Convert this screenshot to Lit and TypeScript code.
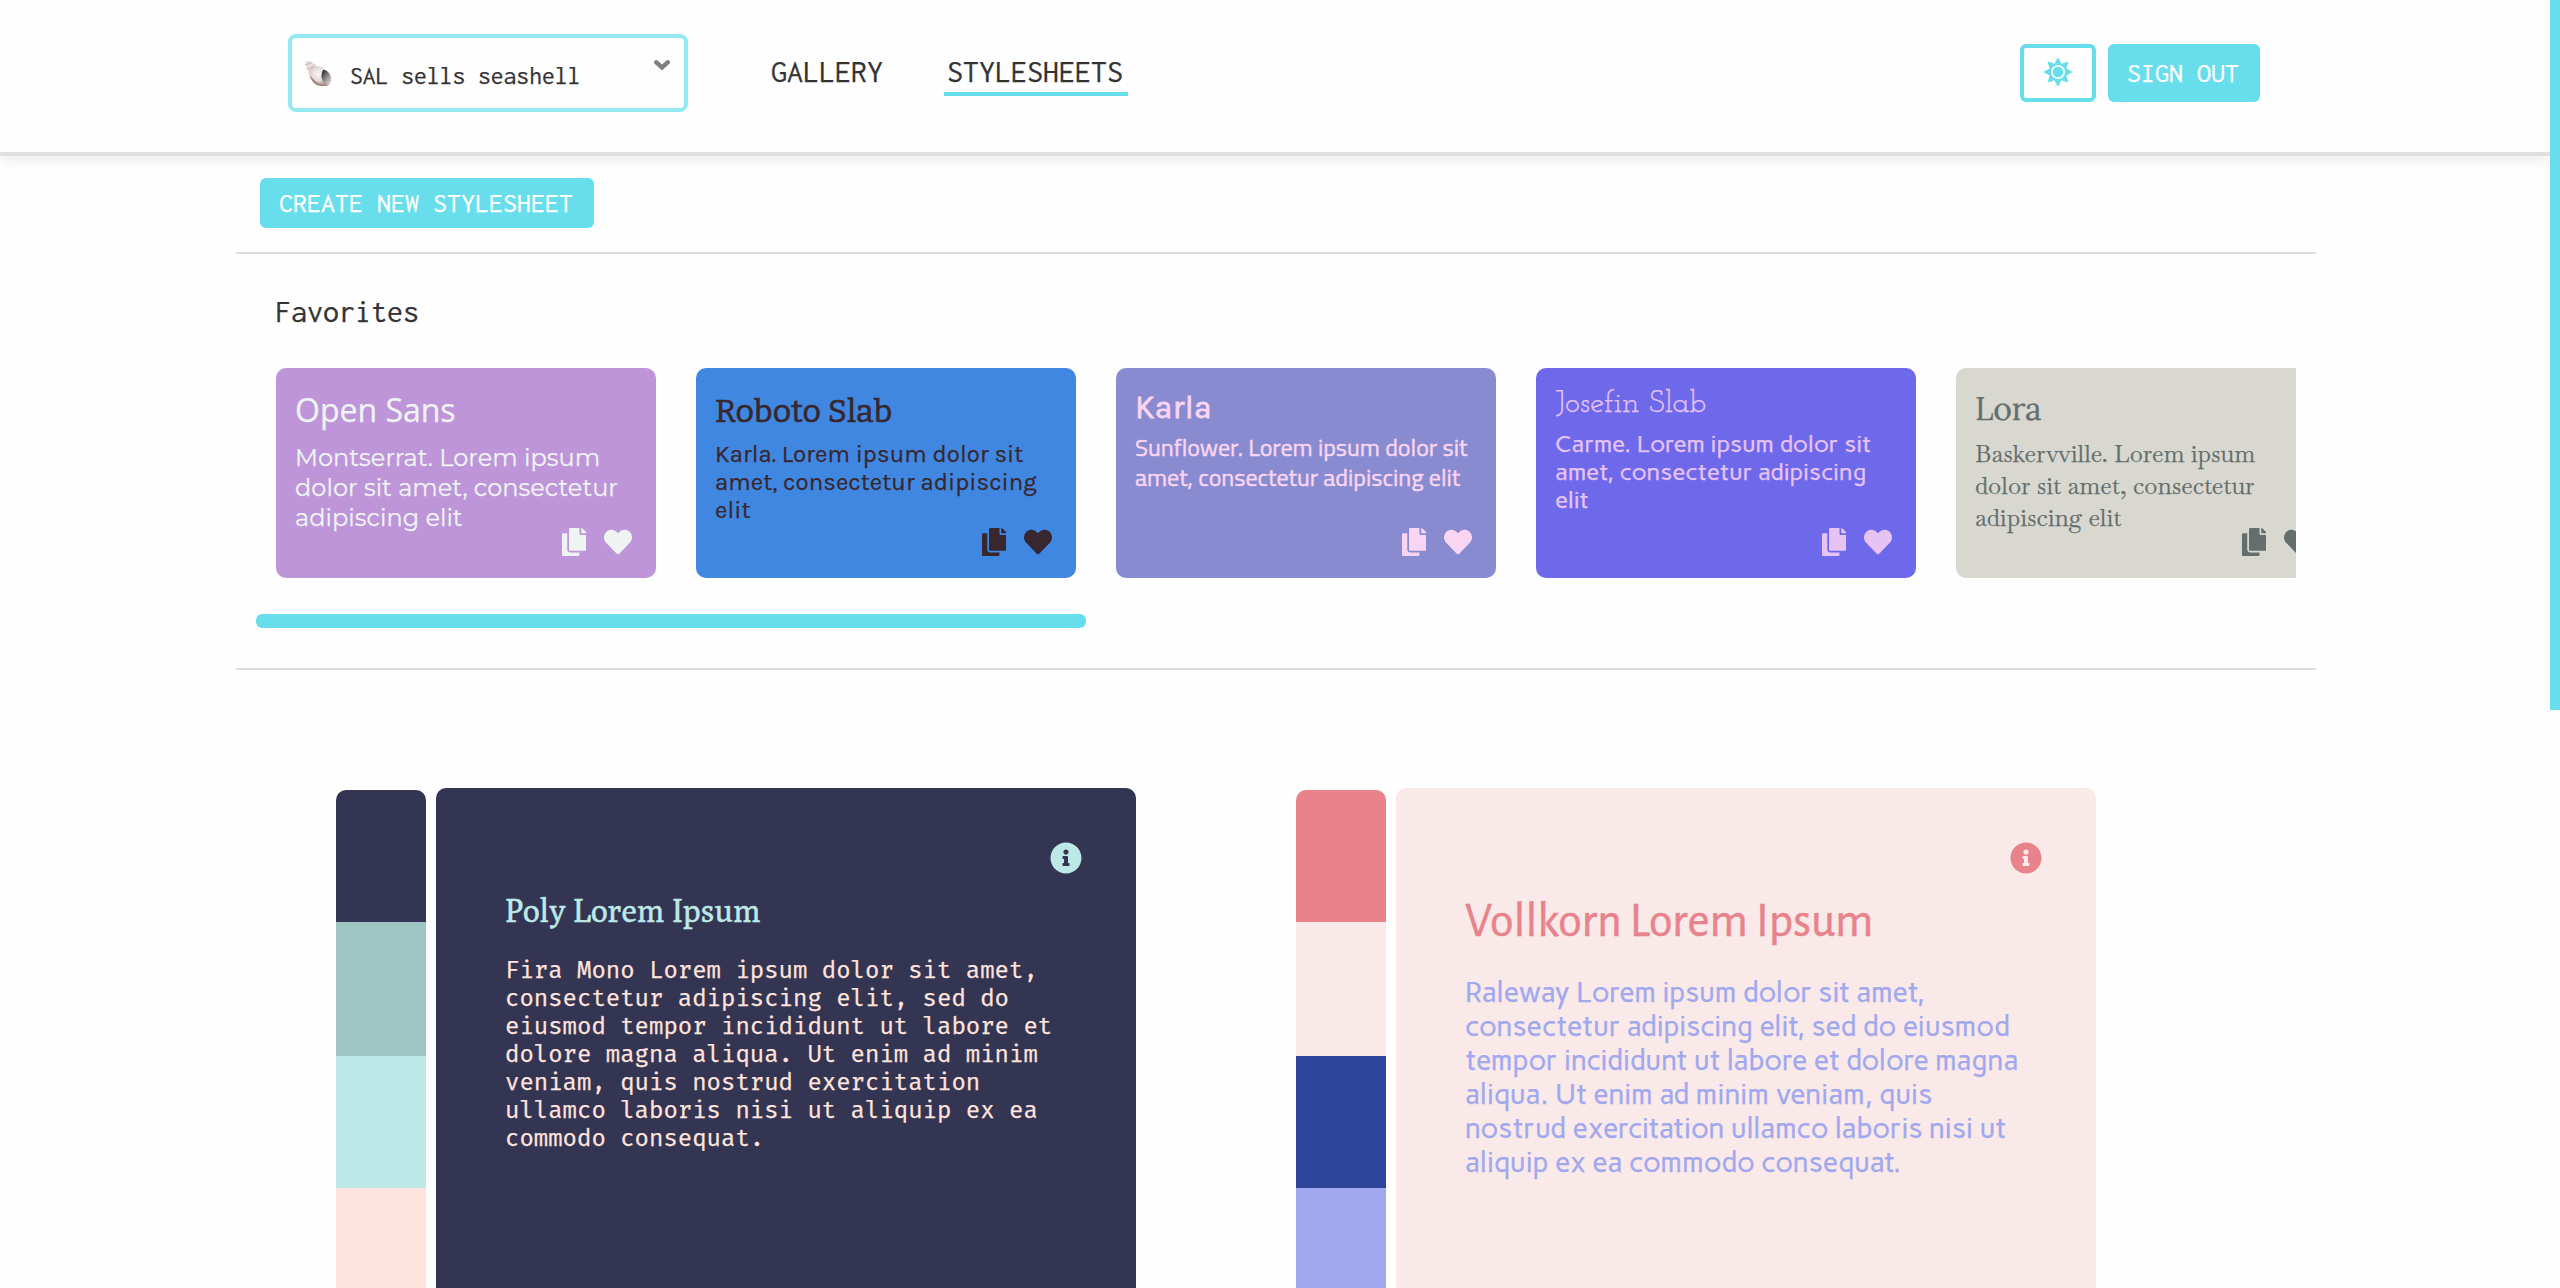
import { LitElement, html, svg, css } from "lit";
import { customElement } from "lit/decorators.js";

const ICONS = {
  copy: {
    box: "0 0 448 512",
    d: "M320 448v40c0 13.255-10.745 24-24 24H24c-13.255 0-24-10.745-24-24V120c0-13.255 10.745-24 24-24h72v296c0 30.879 25.121 56 56 56h168zm0-344V0H152c-13.255 0-24 10.745-24 24v368c0 13.255 10.745 24 24 24h272c13.255 0 24-10.745 24-24V128H344c-13.2 0-24-10.8-24-24zm120.971-31.029L375.029 7.029A24 24 0 0 0 358.059 0H352v96h96v-6.059a24 24 0 0 0-7.029-16.97z",
  },
  heart: {
    box: "0 0 512 512",
    d: "M462.3 62.6C407.5 15.9 326 24.3 275.7 76.2L256 96.5l-19.7-20.3C186.1 24.3 104.5 15.9 49.7 62.6c-62.8 53.6-66.1 149.8-9.9 207.9l193.5 199.8c12.5 12.9 32.8 12.9 45.3 0l193.5-199.8c56.3-58.1 53-154.3-9.8-207.9z",
  },
  info: {
    box: "0 0 512 512",
    d: "M256 8C119.043 8 8 119.083 8 256c0 136.997 111.043 248 248 248s248-111.003 248-248C504 119.083 392.957 8 256 8zm0 110c23.196 0 42 18.804 42 42s-18.804 42-42 42-42-18.804-42-42 18.804-42 42-42zm56 254c0 6.627-5.373 12-12 12h-88c-6.627 0-12-5.373-12-12v-24c0-6.627 5.373-12 12-12h12v-64h-12c-6.627 0-12-5.373-12-12v-24c0-6.627 5.373-12 12-12h64c6.627 0 12 5.373 12 12v100h12c6.627 0 12 5.373 12 12v24z",
  },
  sun: {
    box: "0 0 512 512",
    d: "M256 160c-52.9 0-96 43.1-96 96s43.1 96 96 96 96-43.1 96-96-43.1-96-96-96zm246.4 80.5l-94.7-47.3 33.5-100.4c4.5-13.6-8.4-26.5-21.9-21.9l-100.4 33.5-47.4-94.8c-6.4-12.8-24.6-12.8-31 0l-47.3 94.7L92.7 70.8c-13.6-4.5-26.5 8.4-21.9 21.9l33.5 100.4-94.7 47.4c-12.8 6.4-12.8 24.6 0 31l94.7 47.3-33.5 100.5c-4.5 13.6 8.4 26.5 21.9 21.9l100.4-33.5 47.3 94.7c6.4 12.8 24.6 12.8 31 0l47.3-94.7 100.4 33.5c13.6 4.5 26.5-8.4 21.9-21.9l-33.5-100.4 94.7-47.3c13-6.5 13-24.7.2-31.1zm-155.9 106c-49.9 49.9-131.1 49.9-181 0-49.9-49.9-49.9-131.1 0-181 49.9-49.9 131.1-49.9 181 0 49.9 49.9 49.9 131.1 0 181z",
  },
};

const icon = (name: keyof typeof ICONS) =>
  html`<svg class="icon ${name}" viewBox=${ICONS[name].box}>${svg`<path fill="currentColor" d=${ICONS[name].d}></path>`}</svg>`;

const FAVORITES = [
  { theme: "lilac", title: "Open Sans", text: "Montserrat. Lorem ipsum\ndolor sit amet, consectetur\nadipiscing elit" },
  { theme: "azure", title: "Roboto Slab", text: "Karla. Lorem ipsum dolor sit\namet, consectetur adipiscing\nelit" },
  { theme: "dusk", title: "Karla", text: "Sunflower. Lorem ipsum dolor sit\namet, consectetur adipiscing elit" },
  { theme: "iris", title: "Josefin Slab", text: "Carme. Lorem ipsum dolor sit\namet, consectetur adipiscing\nelit" },
  { theme: "stone", title: "Lora", text: "Baskervville. Lorem ipsum\ndolor sit amet, consectetur\nadipiscing elit" },
];

const SHEETS = [
  {
    theme: "night",
    colors: ["#343453", "#9ec5c1", "#bce9e8", "#ffe4dd"],
    title: "Poly Lorem Ipsum",
    text: "Fira Mono Lorem ipsum dolor sit amet,\nconsectetur adipiscing elit, sed do\neiusmod tempor incididunt ut labore et\ndolore magna aliqua. Ut enim ad minim\nveniam, quis nostrud exercitation\nullamco laboris nisi ut aliquip ex ea\ncommodo consequat.",
  },
  {
    theme: "blush",
    colors: ["#e8828b", "#f9e9e8", "#2d459a", "#a1a8ed"],
    title: "Vollkorn Lorem Ipsum",
    text: "Raleway Lorem ipsum dolor sit amet,\nconsectetur adipiscing elit, sed do eiusmod\ntempor incididunt ut labore et dolore magna\naliqua. Ut enim ad minim veniam, quis\nnostrud exercitation ullamco laboris nisi ut\naliquip ex ea commodo consequat.",
  },
];

@customElement("app-root")
export class AppRoot extends LitElement {
  static styles = css`
    :host {
      display: block;
      --aqua: #68deed;
      font-family: Inconsolata, "Noto Sans Mono CJK SC", "Liberation Mono", monospace;
      color: #333;
      -webkit-text-stroke: 0.25px;
    }
    * { box-sizing: border-box; }
    h2, h3, p { margin: 0; font-weight: 400; }
    svg { display: block; flex: none; }
    .page { display: flex; width: 2560px; height: 1288px; overflow: hidden; background: #fefefe; }
    .content { width: 2550px; }
    .rail { width: 10px; }
    .rail-thumb { height: 710px; background: var(--aqua); }

    header {
      display: flex;
      align-items: flex-start;
      height: 156px;
      padding: 34px 290px 0 288px;
      border-bottom: 4px solid #e0e0e0;
      box-shadow: 0 4px 14px rgba(0, 0, 0, 0.08);
    }
    .select {
      display: flex;
      width: 400px;
      height: 78px;
      padding: 0 14px 0 12px;
      border: 4px solid #94e9f2;
      border-radius: 8px;
      font-size: 25.6px;
      line-height: 28px;
      white-space: pre;
    }
    .shell { width: 28px; height: 28px; margin: 22px 18px 0 0; }
    .select-text { margin-top: 24px; flex: 1; }
    .chevron { width: 16px; height: 10px; margin-top: 22px; }
    nav { display: flex; gap: 56px; margin: 21px 0 0 80px; font-size: 32px; line-height: 34px; }
    .link { padding: 0 5px 3px 3px; border-bottom: 4px solid transparent; }
    .link.active { border-color: var(--aqua); }
    .tools { display: flex; gap: 12px; margin: 10px 0 0 auto; }
    .button {
      display: flex;
      align-items: center;
      justify-content: center;
      border-radius: 6px;
      background: var(--aqua);
      color: #fff;
      font-size: 28px;
      line-height: 30px;
      white-space: pre;
      padding: 0 2px 1px 0;
    }
    .signout { width: 152px; height: 58px; }
    .theme { width: 76px; height: 58px; padding: 0 0 2px; border: 4px solid var(--aqua); background: none; color: var(--aqua); }
    .create { width: 334px; height: 50px; }

    main { width: 2080px; margin-left: 236px; }
    .bar { height: 98px; padding: 22px 24px; border-bottom: 2px solid #ddd; }
    .favorites { height: 416px; padding: 41px 20px 0; border-bottom: 2px solid #ddd; }
    .favorites-title { margin-left: 19px; font-size: 32px; line-height: 34px; }
    .scroller { overflow: hidden; margin-top: 39px; }
    .strip { display: flex; gap: 40px; width: max-content; padding-left: 20px; }
    .strip-thumb { width: 830px; height: 14px; margin-top: 36px; border-radius: 6px; background: var(--aqua); }

    .card { position: relative; width: 380px; height: 210px; padding: 20px 20px 0 19px; border-radius: 10px; white-space: pre; }
    .card-title { font-size: 32px; }
    .card-text { font-size: 24px; margin-top: 10px; }
    .actions { position: absolute; right: 24px; bottom: 22px; display: flex; gap: 18px; }
    .copy { width: 24.5px; height: 28px; }
    .heart, .sun { width: 28px; height: 28px; }

    .lilac { background: #be95d9; color: #eff4f3; }
    .lilac .card-title { font-family: "Open Sans", "Noto Sans", sans-serif; line-height: 44px; }
    .lilac .card-text { font-family: Montserrat, Inter, sans-serif; line-height: 30px; margin-top: 11px; letter-spacing: 0.04px; }
    .azure { background: #4087e1; color: #38272f; }
    .azure .card-title { font-family: "Roboto Slab", Bitter, "Noto Serif", serif; line-height: 46px; letter-spacing: 0.15px; -webkit-text-stroke: 0.7px; }
    .azure .card-text { font-family: Karla, Inter, sans-serif; line-height: 28px; margin-top: 6px; letter-spacing: 0.06px; }
    .dusk { background: #888bd0; color: #fad5f3; }
    .dusk .card-title { font-family: Karla, Inter, sans-serif; line-height: 40px; letter-spacing: 0.35px; -webkit-text-stroke: 0.8px; }
    .dusk .card-text { font-family: Cairo, "Titillium Web", "Noto Sans", sans-serif; line-height: 30px; margin-top: 5px; -webkit-text-stroke: 0.4px; }
    .iris { background: #6d69ea; color: #e6c3f2; }
    .iris .card-title { font-family: "Josefin Slab", Lato, serif; line-height: 32px; letter-spacing: -0.12px; }
    .iris .card-text { font-family: Carme, Lato, sans-serif; line-height: 28px; }
    .stone { background: #d8d8d0; color: #646e6d; }
    .stone .card-title { font-family: Lora, "Liberation Serif", serif; line-height: 42px; letter-spacing: -0.28px; }
    .stone .card-text { font-family: Baskervville, "Liberation Serif", serif; line-height: 32px; margin-top: 8px; }

    .sheets { display: flex; gap: 160px; padding: 118px 0 0 100px; }
    .sheet { display: flex; gap: 10px; }
    .swatches { width: 90px; margin-top: 2px; border-radius: 10px 10px 0 0; overflow: hidden; }
    .swatch { height: 132px; }
    .swatch:nth-child(2) { height: 134px; }
    .sample { width: 700px; height: 560px; padding: 54px 54px 0 69px; border-radius: 10px; white-space: pre; }
    .info { width: 32px; height: 32px; margin: 0 0 18px auto; }
    .night .sample { background: #343453; color: #ffe4dd; }
    .night .info, .night .sample-title { color: #bce9e8; }
    .night .sample-title { font: 32px/36px Poly, "Liberation Serif", serif; -webkit-text-stroke: 0.4px; }
    .night .sample-text { margin-top: 28px; font: 24px/28px "Fira Mono", "DejaVu Sans Mono", monospace; }
    .blush .sample { background: #f9e9e8; color: #a1a8ed; }
    .blush .info, .blush .sample-title { color: #e8828b; }
    .blush .sample-title { font: 48px/60px "Alegreya Sans", Lato, sans-serif; -webkit-text-stroke: 0.5px; }
    .blush .sample-text { margin-top: 23px; font: 28px/34px Carme, Lato, sans-serif; }
  `;

  render() {
    return html`
      <div class="page">
        <div class="content">
          <header>
            <div class="select">
              <svg class="shell" viewBox="0 0 28 28">
                <defs>
                  <radialGradient id="body" cx=".42" cy=".4" r=".62">
                    <stop offset="0" stop-color="#fbf6f5"></stop>
                    <stop offset=".55" stop-color="#e3d8d7"></stop>
                    <stop offset="1" stop-color="#9d8582"></stop>
                  </radialGradient>
                  <linearGradient id="mouth" x1=".1" y1=".1" x2=".8" y2="1">
                    <stop offset="0" stop-color="#2f2c2e"></stop>
                    <stop offset=".5" stop-color="#8a8485"></stop>
                    <stop offset="1" stop-color="#dcd5d4"></stop>
                  </linearGradient>
                </defs>
                <path d="M1.200 2C2.500.6 6.500.8 8.500 2.600l5 5-7.500 7C3.500 11 1.500 6.500 1.200 2z" fill="#e9dfdd"></path>
                <path d="M1.500 4.500C4 4.500 6.500 3.500 8 2.200M3 9c3-.5 6.500-2.500 8-4.500" fill="none" stroke="#bba9a7" stroke-width=".9"></path>
                <path d="M5.500 12C6.500 7.500 11 4.700 15.500 6.500c3 1 5 2.500 7 4 3 2 4.500 5 4.300 8.500-.1 4-2 7-5.800 7-5 .2-10-.5-13-5C6.200 18.500 5 15 5.500 12z" fill="url(#body)"></path>
                <path d="M6 15.500c1 5.500 6 10.500 14 10.700C14.500 24 10 20.500 6 15.500z" fill="#a08480"></path>
                <path d="M19.500 9.800c4 .7 7.200 4.500 7.200 9.200 0 3-1.500 5.600-4 5.500-3.500-2-6-6-5-10.500.3-1.800.8-3.200 1.800-4.200z" fill="url(#mouth)"></path>
              </svg>
              <span class="select-text">SAL sells seashell</span>
              <svg class="chevron" viewBox="0 0 16 10"><path d="M2.300 2.300L8 7.500l5.700-5.200" fill="none" stroke="#808080" stroke-width="4.400" stroke-linecap="round"></path></svg>
            </div>
            <nav>
              <span class="link">GALLERY</span>
              <span class="link active">STYLESHEETS</span>
            </nav>
            <div class="tools">
              <div class="button theme">${icon("sun")}</div>
              <div class="button signout">SIGN OUT</div>
            </div>
          </header>
          <main>
            <div class="bar"><div class="button create">CREATE NEW STYLESHEET</div></div>
            <section class="favorites">
              <h2 class="favorites-title">Favorites</h2>
              <div class="scroller">
                <div class="strip">
                  ${FAVORITES.map(
                    (f) => html`<article class="card ${f.theme}"><h3 class="card-title">${f.title}</h3><p class="card-text">${f.text}</p><div class="actions">${icon("copy")}${icon("heart")}</div></article>`
                  )}
                </div>
              </div>
              <div class="strip-thumb"></div>
            </section>
            <section class="sheets">
              ${SHEETS.map(
                (s) => html`<article class="sheet ${s.theme}">
                  <div class="swatches">${s.colors.map((c) => html`<div class="swatch" style="background:${c}"></div>`)}</div>
                  <div class="sample">${icon("info")}<h3 class="sample-title">${s.title}</h3><p class="sample-text">${s.text}</p></div>
                </article>`
              )}
            </section>
          </main>
        </div>
        <div class="rail"><div class="rail-thumb"></div></div>
      </div>
    `;
  }
}
